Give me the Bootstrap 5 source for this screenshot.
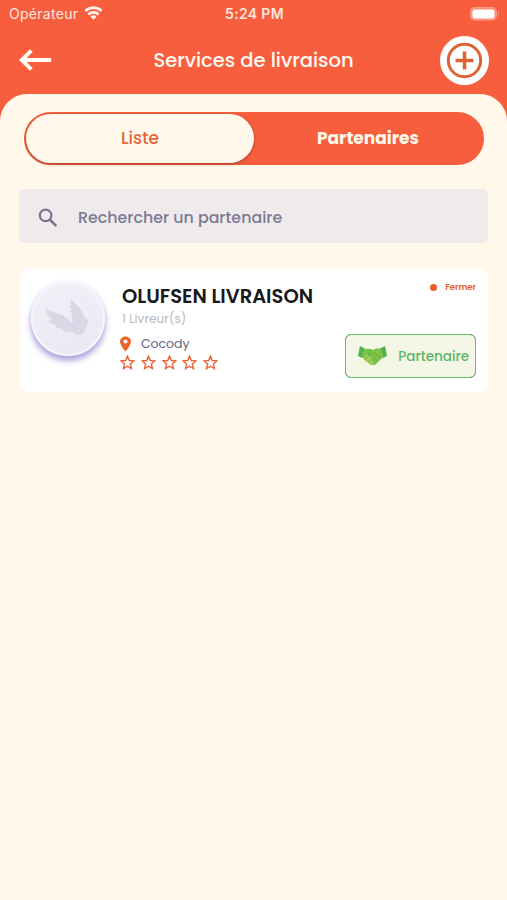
<!DOCTYPE html>
<html lang="fr">
<head>
<meta charset="utf-8">
<meta name="viewport" content="width=device-width, initial-scale=1">
<title>Services de livraison</title>
<link href="https://cdn.jsdelivr.net/npm/bootstrap@5.3.0/dist/css/bootstrap.min.css" rel="stylesheet">
<style>
  body { background: #f75e3e; font-family: Poppins, Inter, sans-serif; font-weight: 500; line-height: 1; white-space: nowrap; }
  svg { display: block; flex: none; }
  .status { height: 28px; padding: 0 7px 0 9px; display: grid; grid-template-columns: 1fr auto 1fr; color: #ffe6de; font-family: Inter, sans-serif; }
  .carrier { font-size: 14px; font-weight: 400; letter-spacing: .28px; }
  .clock { font-size: 14px; font-weight: 600; letter-spacing: .35px; }
  .wifi { margin: -3px 0 0 6px; }
  .topbar { height: 66px; padding: 0 18px 2px; color: #fffaf3; }
  .topbar h1 { font-size: 19.5px; font-weight: 500; line-height: 1; padding-top: 2px; }
  .add { width: 49px; height: 49px; }
  .sheet { background: #fff8eb; border-radius: 27px 27px 0 0; padding: 18px 19px 0; }
  .toggle { height: 53px; margin: 0 4px 0 5px; padding: 2px; background: #f75e3e; }
  .toggle button { border: 0; background: none; color: #fff8eb; border-radius: 26px; font-size: 17px; font-weight: 700; flex: 1; padding: 0 0 1px; }
  .toggle .on { background: #fff8eb; color: #e5673b; font-weight: 500; box-shadow: 0 1px 3px rgba(90,30,20,.55); }
  .search { height: 54px; margin-top: 24px; padding: 3px 19px 0; background: #efebed; border-radius: 5px; color: #7c7a92; font-size: 15.85px; }
  .find { margin-left: 20px; }
  .partner { height: 124px; margin: 25px 0 0 1px; background: #fff; border-radius: 11px; padding: 13px 12px 0 11px; }
  .avatar { width: 74px; height: 74px; background: linear-gradient(160deg,#f0eff6,#ebe8f4); border: 2px solid #f7f5fc; box-shadow: 0 5px 6px rgba(145,123,210,.65), 0 1px 5px rgba(160,145,220,.35); padding: 0 3px 4px 0; margin-top: 1px; }
  .details { margin-left: 17px; }
  .details h2 { font-size: 19.5px; font-weight: 600; line-height: 20px; color: #17191b; margin: 6px 0 0; }
  .drivers { font-size: 12px; font-weight: 400; color: #b9b9bd; line-height: 14px; margin-top: 5px; letter-spacing: .1px; }
  .place { font-size: 12.5px; font-weight: 400; color: #64647f; margin: 10px 0 0 -2px; height: 16px; letter-spacing: -.05px; }
  .town { margin-left: 10px; }
  .stars { margin: 3px 0 0 -2px; gap: 5.8px; }
  .state { color: #ea5c2a; font-size: 8.5px; font-weight: 600; margin-top: 2px; }
  .dot { width: 7px; height: 7px; background: #ea5c2a; }
  .partner .act { width: 131px; height: 44px; margin-top: 42px; padding: 0 6px 0 11px; border: 1.5px solid #6cbc72; border-radius: 6px; background: #f4f7e5; color: #5eb566; font-size: 13.5px; font-weight: 500; line-height: 1; outline: .5px solid #6cbc72; outline-offset: -1px; }
  .act span { padding-top: 2px; }
</style>
</head>
<body class="min-vh-100 d-flex flex-column overflow-hidden">
  <div class="status align-items-center">
    <div class="d-flex align-items-center"><span class="carrier">Opérateur</span>
      <svg class="wifi" width="19" height="14" viewBox="0 0 20 15" fill="none" stroke="#fff0ea" stroke-width="2.9"><path d="M1.3 5.4C6.2.6 13.8.6 18.7 5.4M4.500 9.100C7.600 6.100 12.400 6.100 15.500 9.100"/><path d="M6.700 11.400Q10 8.400 13.300 11.400L10 14.700Z" fill="#fff0ea" stroke="none"/></svg>
    </div>
    <span class="clock">5:24 PM</span>
    <svg class="ms-auto" width="30" height="14" viewBox="0 0 30 14"><rect x=".7" y=".6" width="25.6" height="12.4" rx="3.6" fill="#f98d75" stroke="#faa08b"/><rect x="2.5" y="2.4" width="22" height="9" rx="2" fill="#fff"/><path d="M28 4.5Q30 7 28 9Z" fill="#faa08b"/></svg>
  </div>
  <header class="topbar d-flex align-items-center justify-content-between">
    <svg width="49" height="24" viewBox="0 0 49 24" fill="none" stroke="#fffaf3" stroke-width="3.9"><path d="M33.2 12H4M13.3 2.7 3.8 12l9.5 9.3"/></svg>
    <h1 class="m-0">Services de livraison</h1>
    <span class="add rounded-circle bg-white d-flex align-items-center justify-content-center">
      <svg width="37" height="37" viewBox="0 0 37 37" fill="none" stroke="#df6232"><circle cx="18.5" cy="18.5" r="16.2" stroke-width="3"/><path d="M18.5 9.5v18M9.5 18.5h18" stroke-width="3.5"/></svg>
    </span>
  </header>
  <main class="sheet flex-grow-1">
    <div class="toggle rounded-pill d-flex">
      <button class="on" type="button">Liste</button>
      <button type="button">Partenaires</button>
    </div>
    <div class="search d-flex align-items-center">
      <svg width="20" height="20" viewBox="0 0 20 20" fill="none" stroke="#77758e" stroke-width="2.2"><circle cx="7.6" cy="7.4" r="5.8"/><path d="m11.7 11.5 6.6 6.6" stroke-width="2.6"/></svg>
      <span class="find">Rechercher un partenaire</span>
    </div>
    <article class="partner d-flex">
      <div class="avatar rounded-circle d-flex align-items-center justify-content-center">
        <svg width="44" height="38" viewBox="0 0 44 38" fill="#dad7e6"><path d="M0 9.500C3 13 6 12.500 9 14.300 13 16 16 16 19 18 22 20 24 22 25.700 25L28.300 23.500 27 20 28 19 25.500 17 27.500 15.500 24 12.700 27 11 24.500 8 26.500 7C25 4 25.500 2 26.300 1 28.500 5 33 7 35.700 11 38 14 38.500 17 40 20 43 21 43.500 23 43 25 41.500 27 42 29 40 31 40 34 38 36.700 34 36.500 31 37 29 36 27.300 34 25 34.500 23 34.500 20.500 33.500 19 33.500 18 31.500 16.500 30 13 30.500 11 30 10 28 11 27 12 26.500 12 26.500 7 26.500 4 24.500 3.300 22.500 5 22 7 21.500 7 21.500 3 19 1 14 0 9.500Z"/></svg>
      </div>
      <div class="details">
        <h2>OLUFSEN LIVRAISON</h2>
        <div class="drivers">1 Livreur(s)</div>
        <div class="place d-flex align-items-center">
          <svg width="11" height="16" viewBox="0 0 10 16" preserveAspectRatio="none"><path fill="#eb6327" fill-rule="evenodd" d="M5 .5A5 5 0 0 0 0 5.500C0 9.200 5 15.500 5 15.500S10 9.200 10 5.500A5 5 0 0 0 5 .5ZM5 3.600a1.900 1.900 0 1 1 0 3.800 1.900 1.900 0 0 1 0-3.800Z"/></svg>
          <span class="town">Cocody</span>
        </div>
        <div class="stars d-flex" id="rating"></div>
      </div>
      <div class="ms-auto d-flex flex-column align-items-end">
        <div class="state d-flex align-items-center"><i class="dot rounded-circle me-2"></i><span>Fermer</span></div>
        <button type="button" class="act d-flex align-items-center justify-content-between">
          <svg width="31" height="22" viewBox="0 0 31 22"><path fill="#4fb34b" d="M3 1 8 3.500 5 13 1 11ZM28 1l-5 2.500L26 13l4-2Z"/><path fill="#7cc348" d="M7.500 4Q13 3 16 5 20 2 24 4L26 12 18 20 14 20 5 12Z"/><path fill="#9dcf5a" d="m6 12 3-3 3 3 2 0 1 3 2 1 0 3-3 1-7-5Z"/><path d="m15 5-4 4 3 1 4-2 7 6M16 12l5 4M14 14l4 4M6 13l3-3M8 15l3-3M11 17l2-2" fill="none" stroke="#5ab043" stroke-width=".8"/></svg>
          <span>Partenaire</span>
        </button>
      </div>
    </article>
  </main>
<script src="https://cdn.jsdelivr.net/npm/bootstrap@5.3.0/dist/js/bootstrap.bundle.min.js"></script>
<script>
  const star = '<svg width="15" height="15" viewBox="0 0 15 15" fill="none" stroke="#eb6237" stroke-width="1.4"><path d="m7.500 1.200 1.800 4.300 4.600.4-3.500 3.100 1 4.600-3.900-2.400-3.900 2.400 1-4.600L1.100 5.900l4.600-.4Z"/></svg>';
  document.getElementById('rating').innerHTML = star.repeat(5);
</script>
</body>
</html>
